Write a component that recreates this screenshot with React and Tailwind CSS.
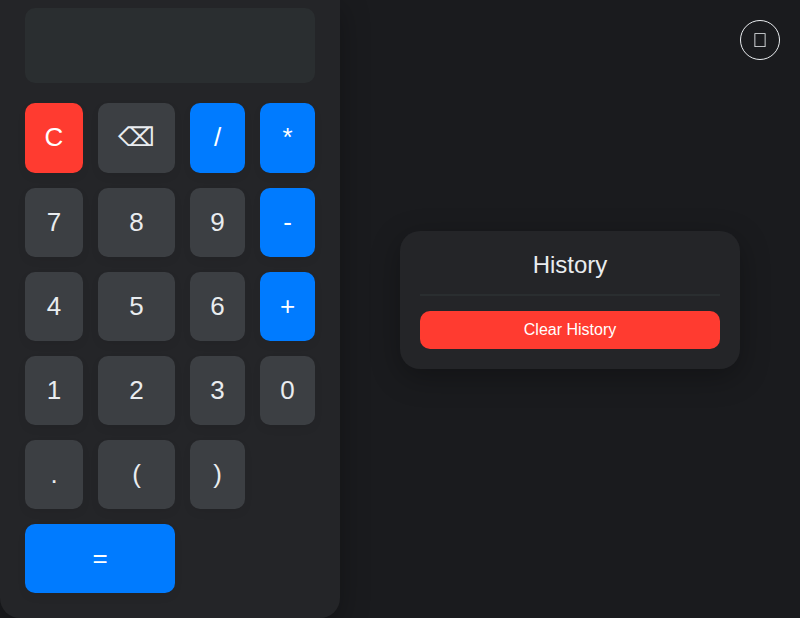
import { useState } from "react";

const KEYS = ["C", "⌫", "/", "*", "7", "8", "9", "-", "4", "5", "6", "+", "1", "2", "3", "0", ".", "(", ")", "="];

const TONES = {
  clear: "bg-[#ff3b30] text-white",
  operator: "bg-[#007bff] text-white",
  equals: "col-span-2 col-start-1 bg-[#007bff] text-white",
  plain: "bg-[#3c3f43] text-[#e9ecef]",
};

function toneOf(key) {
  if (key === "C") return TONES.clear;
  if (key === "=") return TONES.equals;
  if ("/*-+".includes(key)) return TONES.operator;
  return TONES.plain;
}

function Calculator() {
  const [value, setValue] = useState("");

  function press(key) {
    if (key === "C") setValue("");
    else if (key === "⌫") setValue(value.slice(0, -1));
    else if (key !== "=") setValue(value + key);
  }

  return (
    <section
      aria-label="Calculator"
      className="w-[340px] shrink-0 rounded-b-[20px] bg-[#242528] px-[25px] pt-2 pb-[25px] shadow-[0_8px_30px_rgba(0,0,0,0.3)]"
    >
      <input
        aria-label="Display"
        readOnly
        value={value}
        className="mb-5 block h-[75px] w-full rounded-[10px] bg-[#2a2e30] px-5 text-right text-[32px] text-[#e9ecef] outline-none"
      />
      <div className="grid auto-rows-[69px] grid-cols-[58fr_77fr_55fr_55fr] grid-rows-[70px] gap-[15px]">
        {KEYS.map((key) => (
          <button
            key={key}
            type="button"
            onClick={() => press(key)}
            className={`rounded-[10px] pb-0.5 text-[26px] leading-none shadow-[0_4px_10px_rgba(0,0,0,0.05)] ${toneOf(key)}`}
          >
            {key}
          </button>
        ))}
      </div>
    </section>
  );
}

function History() {
  return (
    <section className="w-[340px] rounded-[20px] bg-[#242528] p-5 shadow-[0_8px_30px_rgba(0,0,0,0.3)]">
      <h2 className="border-b-2 border-[#2a2e30] pb-[15px] text-center text-2xl leading-7 text-[#e9ecef]">History</h2>
      <button type="button" className="mt-[15px] block h-[38px] w-full rounded-[10px] bg-[#ff3b30] text-base text-white">
        Clear History
      </button>
    </section>
  );
}

export default function App() {
  return (
    <main className="flex min-h-screen items-start bg-[#1a1b1e] font-['Liberation_Sans',Arial,sans-serif]">
      <Calculator />
      <div className="flex min-h-screen flex-1 items-center pb-[18px] pl-[60px]">
        <History />
      </div>
      <button
        type="button"
        aria-label="Toggle theme"
        className="fixed top-5 right-5 flex size-10 items-center justify-center rounded-full border border-[#e9ecef] text-xl text-[#e9ecef]"
      >
        {"\uf186"}
      </button>
    </main>
  );
}
